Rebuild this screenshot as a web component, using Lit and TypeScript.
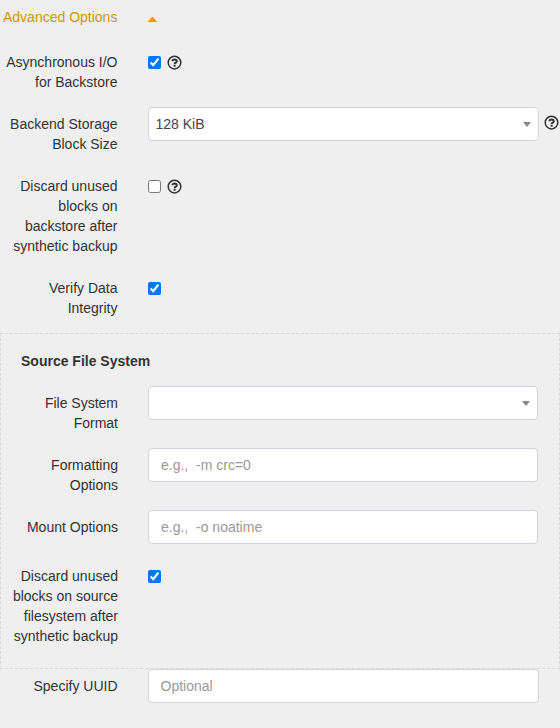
import { LitElement, html, css, svg, nothing } from "lit";
import { customElement, property } from "lit/decorators.js";

@customElement("help-icon")
class HelpIcon extends LitElement {
  static styles = css`
    :host { display: block; width: 14px; height: 14px; }
    svg { display: block; width: 14px; height: 14px; overflow: visible; }
  `;
  render() {
    return html`<svg viewBox="0.5 0.4 14 14" fill="none" stroke="#333">
      ${svg`<circle cx="7" cy="7" r="6.3" stroke-width="1.5"></circle>
      <path d="M4.7 5.5C5.1 4.4 5.9 3.9 7 3.9c1.4 0 2.3.7 2.3 1.8C9.3 7.1 7.2 7 7.1 8.5" stroke-width="1.9"></path>
      <path d="M7.1 9.2v1.9" stroke-width="2"></path>`}
    </svg>`;
  }
}

@customElement("form-row")
class FormRow extends LitElement {
  @property() label = "";
  static styles = css`
    :host { display: flex; align-items: flex-start; margin-bottom: 15px; }
    .label { box-sizing: border-box; width: var(--label-width, 117.5px); flex: none; padding-top: 7px; text-align: right; color: #333; }
    .control { flex: 1; min-width: 0; margin-left: 30px; }
  `;
  render() {
    return html`<div class="label">${this.label}</div><div class="control"><slot></slot></div>`;
  }
}

@customElement("app-root")
class AppRoot extends LitElement {
  static styles = css`
    :host { display: block; box-sizing: border-box; height: 728px; overflow: hidden; background: #efefef; color: #333; font: 14px/20px "Liberation Sans", Arial, sans-serif; }
    .head { display: flex; align-items: center; height: 20px; padding: 7px 0 18px 3px; color: #d0950c; }
    .title { width: 144px; }
    .up { display: block; width: 11px; height: 6px; margin-top: 4px; fill: #ff9800; }
    .checks { display: flex; align-items: center; gap: 6.5px; height: 13px; padding-top: 11px; }
    .checks input { width: 13px; height: 13px; margin: 0 0 0 0.5px; }
    .line { display: flex; }
    .line help-icon { margin: 9px 0 0 5.5px; }
    .field { box-sizing: border-box; display: flex; align-items: center; width: 391.5px; height: 34px; padding: 0 12px; border: 1px solid #d0d3e0; border-radius: 4px; background: #fff; color: #444; font: inherit; outline: none; }
    .select { justify-content: space-between; padding: 0 7px 0 7px; }
    .down { width: 0; height: 0; border: solid transparent; border-width: 5px 4px 0; border-top-color: #888; }
    .field::placeholder { color: #999; opacity: 1; }
    .group { box-sizing: border-box; height: 336px; padding: 17px 0 0; border: 1px dashed #d9d9d9; --label-width: 117px; }
    .group .field { width: 390px; }
    .group .checks input { margin-left: 0; }
    .group-title { margin: 0 0 15px 20px; font: inherit; font-weight: bold; }
  `;

  private check(checked: boolean, help = false) {
    return html`<div class="checks"><input type="checkbox" .checked=${checked}>${help ? html`<help-icon></help-icon>` : nothing}</div>`;
  }
  private select(value = "") {
    return html`<div class="field select"><span>${value}</span><i class="down"></i></div>`;
  }

  render() {
    return html`
      <div class="head"><span class="title">Advanced Options</span><svg class="up" viewBox="0 0 11 6"><path d="M.4 5.9 4.9.9Q5.4.4 5.9.9L10.4 5.9Z"></path></svg></div>
      <form-row label="Asynchronous I/O for Backstore">${this.check(true, true)}</form-row>
      <form-row label="Backend Storage Block Size"><div class="line">${this.select("128 KiB")}<help-icon></help-icon></div></form-row>
      <form-row label="Discard unused blocks on backstore after synthetic backup">${this.check(false, true)}</form-row>
      <form-row label="Verify Data Integrity">${this.check(true)}</form-row>
      <section class="group">
        <h4 class="group-title">Source File System</h4>
        <form-row label="File System Format">${this.select()}</form-row>
        <form-row label="Formatting Options"><input class="field" placeholder="e.g.,&nbsp; -m crc=0"></form-row>
        <form-row label="Mount Options"><input class="field" placeholder="e.g.,&nbsp; -o noatime"></form-row>
        <form-row label="Discard unused blocks on source filesystem after synthetic backup">${this.check(true)}</form-row>
      </section>
      <form-row label="Specify UUID"><input class="field" placeholder="Optional"></form-row>
    `;
  }
}
